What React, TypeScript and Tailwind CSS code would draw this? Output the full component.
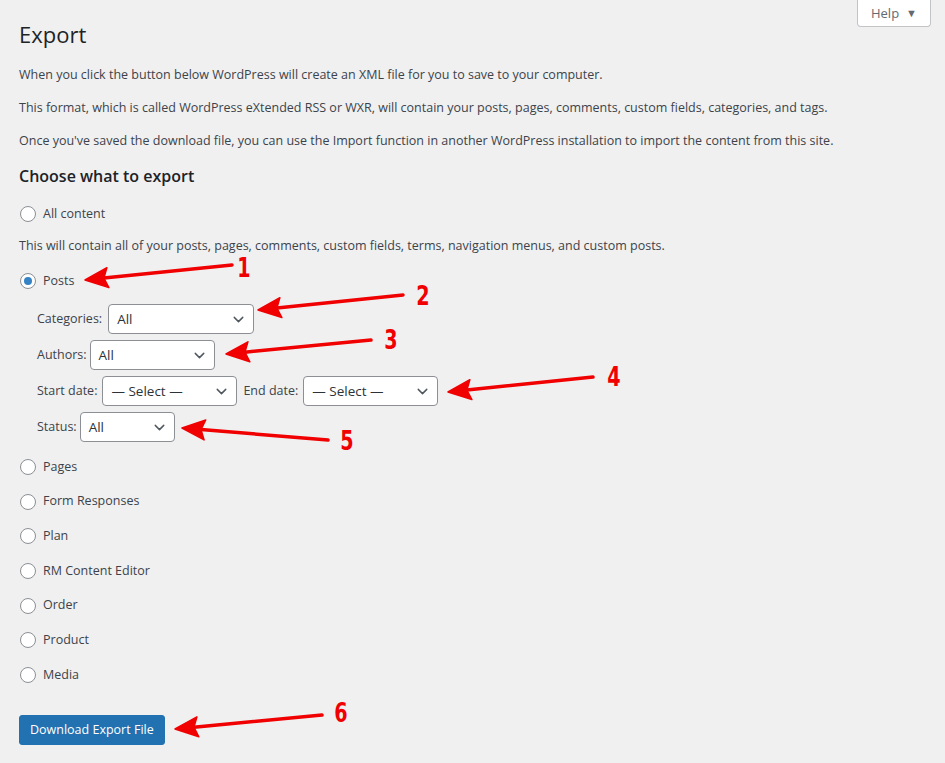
import { ChevronDown } from "lucide-react";

type Pt = [number, number];

function Arrow({ tip, tail, label, at }: { tip: Pt; tail: Pt; label: string; at: Pt }) {
  const dx = tail[0] - tip[0];
  const dy = tail[1] - tip[1];
  const len = Math.hypot(dx, dy);
  const ux = dx / len;
  const uy = dy / len;
  const headLen = 23;
  const half = 10;
  const bx = tip[0] + ux * headLen;
  const by = tip[1] + uy * headLen;
  const nx = -uy;
  const ny = ux;
  const pts = [
    `${tip[0]},${tip[1]}`,
    `${bx + nx * half},${by + ny * half}`,
    `${tip[0] + ux * (headLen - 4)},${tip[1] + uy * (headLen - 4)}`,
    `${bx - nx * half},${by - ny * half}`,
  ].join(" ");
  return (
    <g>
      <line x1={bx - ux * 4} y1={by - uy * 4} x2={tail[0]} y2={tail[1]} stroke="#f00000" strokeWidth={3.5} strokeLinecap="round" />
      <polygon points={pts} fill="#f00000" stroke="#f00000" strokeWidth={1.5} strokeLinejoin="round" />
      <text
        x={at[0]}
        y={at[1]}
        fill="#f00000"
        fontSize={26}
        fontWeight={700}
        textAnchor="middle"
        transform={`translate(${at[0]} ${at[1]}) scale(0.82 1) translate(${-at[0]} ${-at[1]})`}
        style={{ fontFamily: '"DejaVu Sans Condensed", "Liberation Sans", sans-serif' }}
      >
        {label}
      </text>
    </g>
  );
}

function Radio({ label, checked = false }: { label: string; checked?: boolean }) {
  return (
    <label className="flex items-center h-[20px]">
      <span className="w-4 h-4 ml-px rounded-full border border-[#8c8f94] bg-white flex items-center justify-center">
        {checked && <span className="w-2 h-2 rounded-full bg-[#3582c4]" />}
      </span>
      <span className="ml-[7px]">{label}</span>
    </label>
  );
}

function Select({ value, width, ml = "ml-[5px]" }: { value: string; width: string; ml?: string }) {
  return (
    <div
      className={`${width} ${ml} h-[30px] rounded-[4px] border border-[#8c8f94] bg-white flex items-center justify-between pl-[8px] pr-[6px] text-[13.5px] text-[#2c3338]`}
    >
      <span>{value}</span>
      <ChevronDown className="w-[17px] h-[17px] text-[#50575e]" strokeWidth={2} />
    </div>
  );
}

export default function App() {
  return (
    <div
      className="relative w-[945px] min-h-[763px] bg-[#f0f0f1] text-[12.5px] text-[#3c434a] overflow-hidden"
      style={{ fontFamily: '"Open Sans", "Noto Sans", sans-serif' }}
    >
      {/* Help tab */}
      <div className="absolute right-[14px] top-0 w-[74px] h-[27px] pt-px bg-white border border-t-0 border-[#c3c4c7] rounded-b-[4px] flex items-center justify-center gap-[7px] text-[13px] text-[#646970]">
        <span>Help</span>
        <span className="text-[11px]">▼</span>
      </div>

      <div className="pl-[19px] pt-[10px]">
        <h1 className="pt-[9px] pb-[4px] text-[22px] leading-[30px] font-normal text-[#1d2327]">Export</h1>

        <p className="mt-[12px] leading-[20px]">
          When you click the button below WordPress will create an XML file for you to save to your computer.
        </p>
        <p className="mt-[13px] leading-[20px]">
          This format, which is called WordPress eXtended RSS or WXR, will contain your posts, pages, comments, custom fields, categories, and tags.
        </p>
        <p className="mt-[13px] leading-[20px]">
          Once you've saved the download file, you can use the Import function in another WordPress installation to import the content from this site.
        </p>

        <h2 className="mt-[14px] text-[16px] leading-[22px] font-semibold text-[#1d2327]">Choose what to export</h2>

        <div className="mt-[17px]">
          <Radio label="All content" />
        </div>
        <p className="mt-[12px] leading-[20px]">
          This will contain all of your posts, pages, comments, custom fields, terms, navigation menus, and custom posts.
        </p>
        <div className="mt-[15px]">
          <Radio label="Posts" checked />
        </div>

        <div className="ml-[18px] mt-[13px] flex flex-col gap-[6px]">
          <div className="flex items-center">
            <span>Categories:</span>
            <Select value="All" width="w-[146px]" ml="ml-[6px]" />
          </div>
          <div className="flex items-center">
            <span>Authors:</span>
            <Select value="All" width="w-[125px]" ml="ml-[3px]" />
          </div>
          <div className="flex items-center">
            <span>Start date:</span>
            <Select value="— Select —" width="w-[135px]" />
            <span className="ml-[6px]">End date:</span>
            <Select value="— Select —" width="w-[135px]" />
          </div>
          <div className="flex items-center">
            <span>Status:</span>
            <Select value="All" width="w-[95px]" ml="ml-[3px]" />
          </div>
        </div>

        <div className="mt-[15px] flex flex-col gap-[14.7px]">
          <Radio label="Pages" />
          <Radio label="Form Responses" />
          <Radio label="Plan" />
          <Radio label="RM Content Editor" />
          <Radio label="Order" />
          <Radio label="Product" />
          <Radio label="Media" />
        </div>

        <button className="mt-[30px] h-[30px] px-[10px] rounded-[3px] bg-[#2271b1] border border-[#2271b1] text-white text-[12.5px]">
          Download Export File
        </button>
      </div>

      {/* annotations */}
      <svg className="absolute inset-0 pointer-events-none" width={945} height={763}>
        <Arrow tip={[85, 280]} tail={[232, 265]} label="1" at={[244, 277]} />
        <Arrow tip={[258, 310]} tail={[403, 295]} label="2" at={[423, 305]} />
        <Arrow tip={[226, 354]} tail={[371, 340]} label="3" at={[391, 349]} />
        <Arrow tip={[448, 392]} tail={[593, 377]} label="4" at={[614, 386]} />
        <Arrow tip={[182, 428]} tail={[328, 440]} label="5" at={[347, 450]} />
        <Arrow tip={[175, 729]} tail={[322, 715]} label="6" at={[341, 722]} />
      </svg>
    </div>
  );
}
